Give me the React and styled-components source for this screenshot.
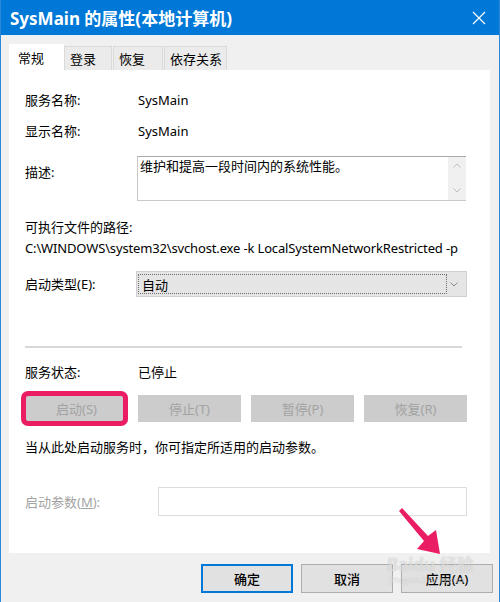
import React from "react";
import styled, { createGlobalStyle } from "styled-components";

const winBlue = "#0078d7";
const pink = "#ea1c63";
const disabledText = "#a3a3a3";

const GlobalStyle = createGlobalStyle`
  html, body {
    margin: 0;
    padding: 0;
    background: #f0f0f0;
  }
  body {
    font-family: "Noto Sans", "Noto Sans CJK SC", sans-serif;
    font-size: 13px;
    color: #000;
  }
`;

const Window = styled.div`
  position: relative;
  width: 500px;
  height: 602px;
  box-sizing: border-box;
  border-left: 1px solid #2b88d8;
  border-right: 1px solid #2b88d8;
  background: #f0f0f0;
  display: flex;
  flex-direction: column;
  overflow: hidden;
`;

const TitleBar = styled.div`
  height: 35px;
  flex: none;
  background: ${winBlue};
  display: flex;
  align-items: center;
  justify-content: space-between;
  padding: 0 12px 0 9px;
  color: #fff;
`;

const Title = styled.div`
  font-family: "Noto Sans", "Noto Sans CJK SC", sans-serif;
  font-weight: 700;
  font-size: 17px;
  margin-top: -1px;
`;

const Close = styled.svg`
  width: 14px;
  height: 14px;
  margin-right: 1px;
`;

const Body = styled.div`
  flex: 1;
  display: flex;
  flex-direction: column;
  padding: 9px 9px 0 8px;
`;

const TabBar = styled.div`
  display: flex;
  align-items: flex-end;
  height: 26px;
`;

const Tab = styled.div`
  box-sizing: border-box;
  height: ${(p) => (p.active ? "26px" : "24px")};
  width: ${(p) => p.w}px;
  padding-left: ${(p) => (p.active ? 8 : 5)}px;
  display: flex;
  align-items: center;
  background: ${(p) => (p.active ? "#fff" : "#ebebeb")};
  border: 1px solid ${(p) => (p.active ? "#fff" : "#dadada")};
  border-bottom: none;
  margin-right: ${(p) => (p.active ? 0 : 1)}px;
  font-size: 13px;
`;

const Panel = styled.div`
  position: relative;
  background: #fff;
  height: 483px;
  box-sizing: border-box;
  padding: 20px 0 0 16px;
  display: flex;
  flex-direction: column;
`;

const Row = styled.div`
  display: flex;
  align-items: ${(p) => p.align || "center"};
  min-height: 20px;
  margin-top: ${(p) => p.mt || 0}px;
`;

const Label = styled.div`
  width: 113px;
  flex: none;
  line-height: 20px;
  color: ${(p) => (p.disabled ? disabledText : "#000")};
  margin-top: ${(p) => p.mt || 0}px;
`;

const Value = styled.div`
  line-height: 20px;
  white-space: nowrap;
  letter-spacing: ${(p) => p.ls || 0}px;
`;

const Desc = styled.div`
  width: 329px;
  height: 45px;
  box-sizing: border-box;
  border: 1px solid #c9c9c9;
  border-top-color: #a9a9a9;
  border-right: none;
  display: flex;
  margin-left: -1px;
`;

const DescText = styled.div`
  flex: 1;
  padding: 1px 0 0 2px;
  line-height: 17px;
`;

const ScrollBar = styled.div`
  width: 18px;
  background: #f0f0f0;
  display: flex;
  flex-direction: column;
  align-items: center;
  justify-content: space-between;
  padding: 6px 0 7px;
  box-sizing: border-box;
`;

const Select = styled.div`
  width: 331px;
  height: 26px;
  box-sizing: border-box;
  margin-left: -2px;
  background: #e5e5e5;
  border: 1px solid #cfcfcf;
  display: flex;
  align-items: center;
  padding: 0 8px 0 1px;
`;

const FocusBox = styled.div`
  width: 309px;
  height: 20px;
  box-sizing: border-box;
  border: 1px dotted #6f6f6f;
  display: flex;
  align-items: center;
  padding-left: 3px;
`;

const Chevron = styled.svg`
  margin-left: auto;
  width: 8px;
  height: 5px;
`;

const Separator = styled.div`
  width: 437px;
  height: 2px;
  background: #d8d8d8;
  margin-top: 49px;
`;

const ButtonGrid = styled.div`
  position: relative;
  display: grid;
  grid-template-columns: repeat(4, 103px);
  column-gap: 10px;
  margin-top: 13px;
  width: 442px;
`;

const DisabledButton = styled.div`
  height: 27px;
  background: #cccccc;
  color: ${disabledText};
  display: flex;
  align-items: center;
  justify-content: center;
`;

const Highlight = styled.div`
  position: absolute;
  left: -4px;
  top: -4px;
  width: 107px;
  height: 35px;
  box-sizing: border-box;
  border: 5px solid ${pink};
  border-radius: 7px;
  pointer-events: none;
`;

const ParamInput = styled.div`
  width: 309px;
  height: 29px;
  box-sizing: border-box;
  border: 1px solid #dcdcdc;
  margin-left: 20px;
`;

const Footer = styled.div`
  display: flex;
  justify-content: flex-end;
  gap: 8px;
  margin-top: 11px;
  margin-right: -3px;
`;

const DialogButton = styled.div`
  width: 92px;
  height: 29px;
  box-sizing: border-box;
  background: #e1e1e1;
  border: ${(p) => (p.focused ? `2px solid ${winBlue}` : "1px solid #adadad")};
  display: flex;
  align-items: center;
  justify-content: center;
  font-weight: 500;
`;

const Arrow = styled.svg`
  position: absolute;
  left: 395px;
  top: 505px;
  width: 50px;
  height: 55px;
`;

const Watermark = styled.div`
  position: absolute;
  left: 386px;
  top: 556px;
  color: rgba(255, 255, 255, 0.5);
  text-shadow: 0 0 1px rgba(120, 120, 120, 0.4);
  font-size: 17px;
  font-weight: 700;
  line-height: 18px;
  pointer-events: none;
  white-space: nowrap;
`;

const WaterSub = styled.div`
  font-size: 9px;
  font-weight: 400;
  line-height: 11px;
  margin-left: 2px;
`;

export default function App() {
  return (
    <>
      <GlobalStyle />
      <Window>
        <TitleBar>
          <Title>SysMain 的属性(本地计算机)</Title>
          <Close viewBox="0 0 14 14">
            <path d="M1 1 L13 13 M13 1 L1 13" stroke="#fff" strokeWidth="1.2" />
          </Close>
        </TitleBar>
        <Body>
          <TabBar>
            <Tab active w={55}>常规</Tab>
            <Tab w={48}>登录</Tab>
            <Tab w={50}>恢复</Tab>
            <Tab w={63}>依存关系</Tab>
          </TabBar>
          <Panel>
            <Row>
              <Label>服务名称:</Label>
              <Value>SysMain</Value>
            </Row>
            <Row mt={11}>
              <Label>显示名称:</Label>
              <Value>SysMain</Value>
            </Row>
            <Row mt={15} align="flex-start">
              <Label mt={6}>描述:</Label>
              <Desc>
                <DescText>维护和提高一段时间内的系统性能。</DescText>
                <ScrollBar>
                  <svg width="8" height="5" viewBox="0 0 8 5">
                    <path d="M0.5 4.5 L4 1 L7.5 4.5" fill="none" stroke="#bdbdbd" />
                  </svg>
                  <svg width="8" height="5" viewBox="0 0 8 5">
                    <path d="M0.5 0.5 L4 4 L7.5 0.5" fill="none" stroke="#bdbdbd" />
                  </svg>
                </ScrollBar>
              </Desc>
            </Row>
            <Row mt={16}>
              <Value>可执行文件的路径:</Value>
            </Row>
            <Row mt={1}>
              <Value ls={-0.15}>C:\WINDOWS\system32\svchost.exe -k LocalSystemNetworkRestricted -p</Value>
            </Row>
            <Row mt={13}>
              <Label>启动类型(E):</Label>
              <Select>
                <FocusBox>自动</FocusBox>
                <Chevron viewBox="0 0 8 5">
                  <path d="M0.5 0.5 L4 4 L7.5 0.5" fill="none" stroke="#8a8a8a" />
                </Chevron>
              </Select>
            </Row>
            <Separator />
            <Row mt={14}>
              <Label>服务状态:</Label>
              <Value>已停止</Value>
            </Row>
            <ButtonGrid>
              <DisabledButton>启动(S)</DisabledButton>
              <DisabledButton>停止(T)</DisabledButton>
              <DisabledButton>暂停(P)</DisabledButton>
              <DisabledButton>恢复(R)</DisabledButton>
              <Highlight />
            </ButtonGrid>
            <Row mt={15}>
              <Value>当从此处启动服务时，你可指定所适用的启动参数。</Value>
            </Row>
            <Row mt={30}>
              <Label disabled>启动参数(<u>M</u>):</Label>
              <ParamInput />
            </Row>
          </Panel>
          <Footer>
            <DialogButton focused>确定</DialogButton>
            <DialogButton>取消</DialogButton>
            <DialogButton>应用(A)</DialogButton>
          </Footer>
        </Body>
        <Arrow viewBox="0 0 50 55">
          <polygon
            points="3,6 6,3 32,31 40,25 44,49 21,44 28,36"
            fill={pink}
          />
        </Arrow>
        <Watermark>
          Baidu 经验
          <WaterSub>jingyan.baidu.com</WaterSub>
        </Watermark>
      </Window>
    </>
  );
}
